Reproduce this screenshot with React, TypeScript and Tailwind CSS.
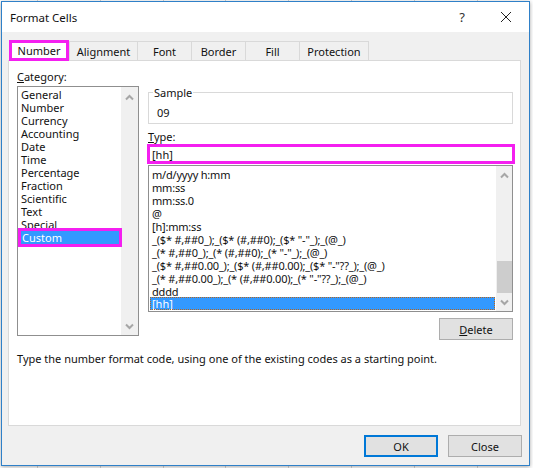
const UI = "font-['Noto_Sans','Open_Sans',sans-serif]";

function Chevron({ up, className }: { up?: boolean; className?: string }) {
  return (
    <svg width="9" height="7" viewBox="0 0 9 7" className={className}>
      <path d={up ? "M1 5.5 L4.5 2 L8 5.5" : "M1 1.5 L4.5 5 L8 1.5"} fill="none" stroke="#a6a6a6" strokeWidth="2" />
    </svg>
  );
}

const categories = ["General", "Number", "Currency", "Accounting", "Date", "Time", "Percentage", "Fraction", "Scientific", "Text", "Special"];
const types = [
  "m/d/yyyy h:mm",
  "mm:ss",
  "mm:ss.0",
  "@",
  "[h]:mm:ss",
  '_($* #,##0_);_($* (#,##0);_($* "-"_);_(@_)',
  '_(* #,##0_);_(* (#,##0);_(* "-"_);_(@_)',
  '_($* #,##0.00_);_($* (#,##0.00);_($* "-"??_);_(@_)',
  '_(* #,##0.00_);_(* (#,##0.00);_(* "-"??_);_(@_)',
  "dddd",
];
const tabs = [
  { label: "Alignment", cls: "w-[69px]" },
  { label: "Font", cls: "w-[55px] -ml-px" },
  { label: "Border", cls: "w-[55px] -ml-px" },
  { label: "Fill", cls: "w-[55px] -ml-px" },
  { label: "Protection", cls: "w-[70px] -ml-px" },
];

export default function App() {
  return (
    <div className={`${UI} w-[533px] h-[468px] overflow-hidden bg-white pl-[1px] pt-[1px] text-[11px] leading-[13px] text-[#111] bg-[repeating-linear-gradient(90deg,transparent_0,transparent_37px,#d4d4d4_37px,#d4d4d4_38px,transparent_38px,transparent_62.8px)]`}>
      <div className="w-[529px] h-[465px] border border-[#2f80c8] bg-[#f0f0f0] flex flex-col shadow-[0_1px_4px_rgba(0,0,0,0.35)]">
        <div className="h-[30px] bg-white flex items-center pl-[8px] shrink-0">
          <span className="text-[11.5px] flex-1 mt-[1px]">Format Cells</span>
          <span className="text-[13px] mr-[35px] text-[#333]">?</span>
          <svg width="12" height="12" viewBox="0 0 12 12" className="mr-[17px]">
            <path d="M1 1 L11 11 M11 1 L1 11" stroke="#222" strokeWidth="1" fill="none" />
          </svg>
        </div>

        <div className="flex items-end h-[28px] ml-[7px] shrink-0">
          <div className="relative z-10 w-[60px] h-[21px] border-[3px] border-[#f41ff0] bg-white flex items-center justify-center mb-[-1px]">Number</div>
          {tabs.map((t) => (
            <div key={t.label} className={`${t.cls} h-[19px] border border-b-0 border-[#d9d9d9] flex items-center justify-center`}>{t.label}</div>
          ))}
        </div>

        <div className="ml-[6px] w-[513px] h-[366px] bg-white border border-[#d9d9d9] shrink-0 flex flex-col">
          <div className="flex pl-[8px] pt-[9px] h-[279px]">
            <div className="w-[122px] shrink-0">
              <div className="h-[16px]"><span className="underline">C</span>ategory:</div>
              <div className="h-[250px] border border-[#8f8f8f] flex">
                <div className="flex-1 min-w-0 pt-[1px] pl-[3px]">
                  {categories.map((c) => (
                    <div key={c} className="h-[13px] flex items-center">{c}</div>
                  ))}
                  <div className="relative h-[19px] -mt-[3px] -ml-[3px] -mr-px border-[3px] border-[#f41ff0] bg-[#3399ff] text-white flex items-center pl-[1px]">Custom</div>
                </div>
                <div className="w-[17px] bg-[#f0f0f0] flex flex-col items-center justify-between pt-[7px] pb-[5px]">
                  <Chevron up />
                  <Chevron />
                </div>
              </div>
            </div>

            <div className="ml-[8px] w-[366px] shrink-0">
              <div className="relative h-[32px] mt-[22px] ml-[1px] border border-[#d9d9d9] pl-[8px] pt-[13px]">
                <span className="absolute left-[4px] -top-[7px] bg-white px-[1px]">Sample</span>
                <span>09</span>
              </div>
              <div className="mt-[6px] h-[14px] ml-[1px]"><span className="underline">T</span>ype:</div>
              <div className="h-[20px] w-[368px] border-[3px] border-[#f41ff0] bg-white flex items-center pl-[2px]">[hh]</div>
              <div className="h-[147px] mt-[1px] ml-[1px] border border-[#8f8f8f] flex">
                <div className="flex-1 min-w-0 pt-[2px] pl-[1px] pr-[1px]">
                  {types.map((t) => (
                    <div key={t} className="h-[13px] flex items-center whitespace-nowrap pl-[2px] tracking-[-0.2px]">{t}</div>
                  ))}
                  <div className="h-[13px] -mt-[1px] bg-[#3399ff] text-white flex items-center pl-[2px] outline-1 outline-dotted outline-[#b5651d] -outline-offset-1">[hh]</div>
                </div>
                <div className="w-[16px] bg-[#f0f0f0] flex flex-col items-center pt-[6px]">
                  <Chevron up />
                  <div className="w-[15px] h-[32px] bg-[#cdcdcd] mt-[82px]" />
                  <Chevron className="mt-[6px]" />
                </div>
              </div>
              <div className="flex justify-end mt-[6px]">
                <div className="w-[74px] h-[22px] border border-[#adadad] bg-[#e1e1e1] flex items-center justify-center"><span><span className="underline">D</span>elete</span></div>
              </div>
            </div>
          </div>
          <div className="pl-[8px] mt-[12px]">Type the number format code, using one of the existing codes as a starting point.</div>
        </div>

        <div className="flex justify-end gap-[10px] mt-[9px] pr-[7px]">
          <div className="w-[74px] h-[22px] border-2 border-[#0078d7] bg-[#e1e1e1] flex items-center justify-center">OK</div>
          <div className="w-[74px] h-[22px] border border-[#adadad] bg-[#e1e1e1] flex items-center justify-center">Close</div>
        </div>
      </div>
    </div>
  );
}
